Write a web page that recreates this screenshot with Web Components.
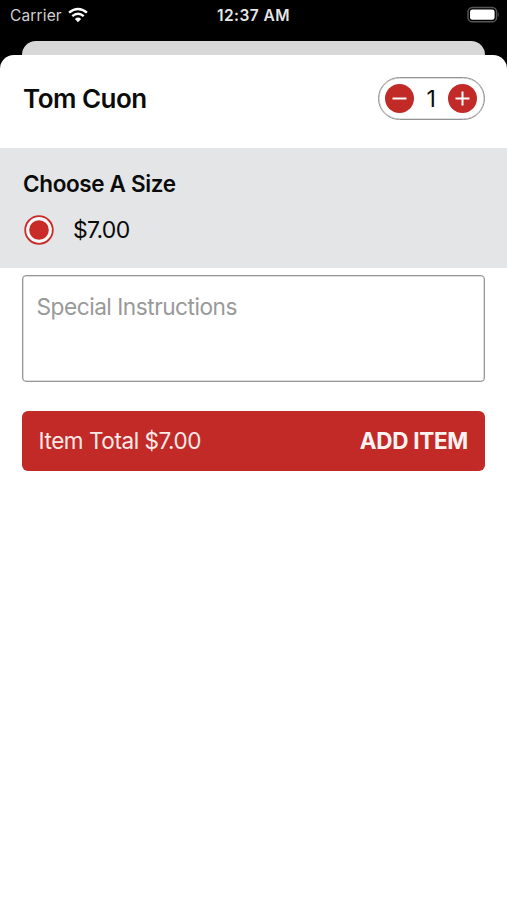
<!DOCTYPE html>
<html lang="en">
<head>
<meta charset="utf-8">
<title>Tom Cuon</title>
<style>
html,body{margin:0;height:100%;background:#000}
body{font-family:Inter,"Liberation Sans",sans-serif;color:#0b0b0b;overflow:hidden}
</style>
</head>
<body>
<order-screen></order-screen>
<script>
function define(name, html) {
  const t = document.createElement('template');
  t.innerHTML = html;
  customElements.define(name, class extends HTMLElement {
    constructor() {
      super();
      this.attachShadow({ mode: 'open' }).appendChild(t.content.cloneNode(true));
    }
  });
}

define('status-bar', `
<style>
:host{display:grid;grid-template-columns:1fr auto 1fr;align-items:center;height:30px;padding:0 8px 0 10px;box-sizing:border-box;color:#e6e6e6;font-size:15.5px;line-height:30px}
.left{display:flex;align-items:center;gap:6px;color:#cfcfcf}
.left span{letter-spacing:.15px;padding-top:1px}
.left svg{margin-bottom:1px}
.time{font-weight:600;letter-spacing:.45px;margin-right:2px;padding-top:1px}
.right{display:flex;justify-content:flex-end;padding-bottom:1px}
svg{display:block}
</style>
<div class="left"><span>Carrier</span>
<svg width="20" height="16" viewBox="0 0 21 16"><g fill="none" stroke="#fff" stroke-width="2.5"><path d="M1.1 5.6Q10.5-2.4 19.9 5.6"/><path d="M4.5 9.2Q10.5 4.2 16.5 9.2"/></g><path d="M10.5 15.6L7.2 12.2Q10.5 9.2 13.8 12.2Z" fill="#fff"/></svg></div>
<div class="time">12:37 AM</div>
<div class="right"><svg width="33" height="18" viewBox="0 0 33 18"><rect x="2" y="1.4" width="28.6" height="14.4" rx="4.4" fill="none" stroke="#555" stroke-width="1.5"/><rect x="4" y="3.4" width="24.6" height="10.4" rx="2.4" fill="#fff"/><path d="M32 6.3Q33.6 8.6 32 10.9Z" fill="#555"/></svg></div>`);

define('round-button', `
<style>
:host{display:grid;place-items:center;width:29px;height:29px;border-radius:50%;background:#c22a27}
::slotted(svg){display:block}
</style><slot></slot>`);

define('quantity-stepper', `
<style>
:host{display:flex;align-items:center;justify-content:space-between;width:107px;height:43px;padding:0 6.5px 0 6px;box-sizing:border-box;border:1px solid #929292;box-shadow:inset 0 0 0 .5px #bbb;border-radius:22px;background:#fff;font-size:23px}
</style>
<round-button><svg width="17" height="17"><path d="M1.5 8.5H15.5" stroke="#fff" stroke-width="2"/></svg></round-button>
<span><slot></slot></span>
<round-button><svg width="17" height="17"><path d="M1.5 8.5H15.5M8.5 1.5V15.5" stroke="#fff" stroke-width="2"/></svg></round-button>`);

define('item-header', `
<style>
:host{display:flex;align-items:center;justify-content:space-between;height:93px;padding:0 22px 6px 23px;box-sizing:border-box}
h1{margin:0;font-size:26px;font-weight:600;line-height:32px;letter-spacing:-.5px}
</style><h1><slot></slot></h1><quantity-stepper>1</quantity-stepper>`);

define('size-option', `
<style>
:host{display:flex;align-items:center;gap:19px;height:30px;font-size:23px;line-height:30px;letter-spacing:-.7px}
</style>
<svg width="30" height="30"><circle cx="15" cy="15" r="13.8" fill="#fff" fill-opacity=".65" stroke="#c92c28" stroke-width="1.8"/><circle cx="15" cy="15" r="9.8" fill="#c92c28"/></svg>
<span><slot></slot></span>`);

define('size-picker', `
<style>
:host{display:block;height:120px;padding:21px 24px 0;box-sizing:border-box;background:#e3e5e7}
h2{margin:0 0 17px -1px;font-size:22.5px;font-weight:600;line-height:29px;letter-spacing:-.36px}
</style><h2>Choose A Size</h2><slot></slot>`);

define('instructions-field', `
<style>
:host{display:block;margin:7px 22px 0;height:107px;padding:17px 13.5px;box-sizing:border-box;border:1px solid #969696;box-shadow:inset 0 0 0 .5px #bbb;border-radius:4px;color:#999;font-size:22.7px;line-height:28px;letter-spacing:-.5px}
</style><span><slot></slot></span>`);

define('add-bar', `
<style>
:host{display:flex;align-items:center;justify-content:space-between;margin:29px 22px 0;height:59.5px;padding:0 17px 0 16.5px;box-sizing:border-box;border-radius:6px;background:#c22a27;color:#fbe9e8;font-size:22.5px;line-height:30px}
span{letter-spacing:-.43px}
b{font-weight:700;color:#fff3f2;letter-spacing:-.3px}
</style><span><slot></slot></span><b>ADD ITEM</b>`);

define('order-screen', `
<style>
:host{display:flex;flex-direction:column;height:900px}
.back{margin:11px 22px 0;height:26px;flex:none;border-radius:14px 14px 0 0;background:#d8d8d8}
main{flex:1;margin-top:-12px;border-radius:14px 14px 0 0;background:#fff}
</style>
<status-bar></status-bar><div class="back"></div>
<main>
<item-header>Tom Cuon</item-header>
<size-picker><size-option>$7.00</size-option></size-picker>
<instructions-field>Special Instructions</instructions-field>
<add-bar>Item Total $7.00</add-bar>
</main>`);
</script>
</body>
</html>
